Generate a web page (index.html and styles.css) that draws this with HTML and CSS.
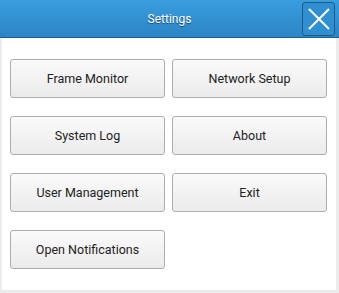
FILE: index.html
```html
<!DOCTYPE html>
<html lang="en">
<head>
  <meta charset="UTF-8" />
  <title>Settings</title>
  <link rel="stylesheet" href="styles.css">
</head>
<body>
  <div class="dialog">
    <div class="titlebar">
      <span class="title">Settings</span>
      <button class="close" aria-label="Close">
        <svg width="24" height="24" viewBox="0 0 24 24">
          <path d="M2 2 L22 22 M22 2 L2 22" stroke="#fff" stroke-width="2" fill="none" />
        </svg>
      </button>
    </div>
    <div class="content">
      <div class="menu">
        <button class="item">Frame Monitor</button>
        <button class="item">Network Setup</button>
        <button class="item">System Log</button>
        <button class="item">About</button>
        <button class="item">User Management</button>
        <button class="item">Exit</button>
        <button class="item">Open Notifications</button>
      </div>
    </div>
  </div>
</body>
</html>
```

FILE: styles.css
```css
html, body {
  margin: 0;
  padding: 0;
  width: 339px;
  height: 293px;
  overflow: hidden;
}

body {
  font-family: Roboto, "Liberation Sans", sans-serif;
  background: #ececec;
}

.dialog {
  width: 339px;
  height: 293px;
  display: flex;
  flex-direction: column;
}

.titlebar {
  height: 37px;
  border-bottom: 1px solid #1d5f8e;
  background: linear-gradient(#3a9ddd, #2b85c6);
  display: flex;
  align-items: center;
  justify-content: center;
  position: relative;
}

.title {
  color: #fff;
  font-size: 12px;
  text-shadow: 0 1px 1px rgba(0, 0, 0, 0.5);
}

.close {
  position: absolute;
  right: 4px;
  top: 2px;
  width: 33px;
  height: 34px;
  padding: 0;
  border: 1px solid #1e5a88;
  border-radius: 3px;
  background: #2f8fd0;
  display: flex;
  align-items: center;
  justify-content: center;
}

.content {
  flex: 1;
  background: #fff;
  margin: 0 3px 3px 2px;
  padding: 21px 6px 0 8px;
}

.menu {
  display: grid;
  grid-template-columns: 155px 155px;
  column-gap: 7px;
  row-gap: 18px;
}

.item {
  height: 39px;
  border: 1px solid #adadad;
  border-radius: 3px;
  background: linear-gradient(#fafafa, #ebebeb);
  color: #222;
  font-family: Roboto, "Liberation Sans", sans-serif;
  font-size: 12.5px;
  padding: 0;
}
```
